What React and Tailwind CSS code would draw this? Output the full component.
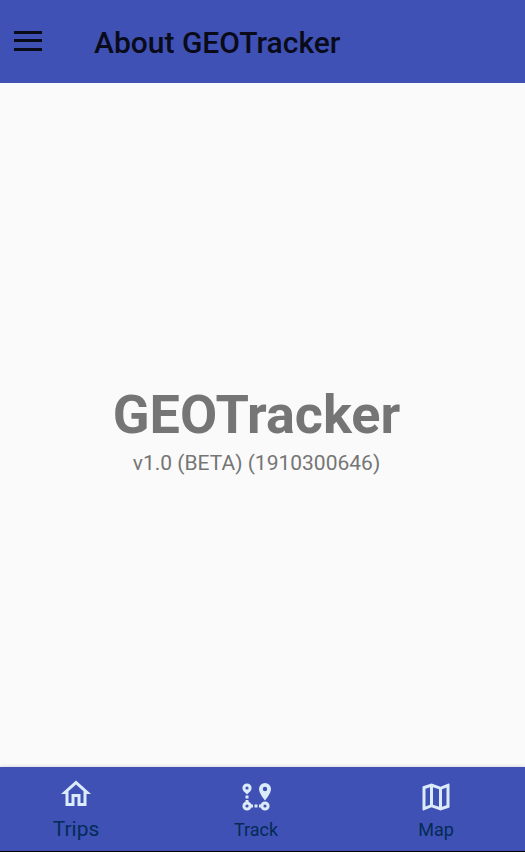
function HomeIcon() {
  return (
    <svg viewBox="0 0 24 24" className="size-9" fill="currentColor" aria-hidden="true">
      <path d="m12 5.69 5 4.5V18h-2v-6H9v6H7v-7.81l5-4.5M12 3 2 12h3v8h6v-6h2v6h6v-8h3L12 3z" />
    </svg>
  );
}

function TrackIcon() {
  return (
    <svg viewBox="0 0 36 36" className="size-9" fill="none" stroke="currentColor" aria-hidden="true">
      <g strokeWidth="3">
        <circle cx="9" cy="9" r="3.1" />
        <circle cx="9" cy="27" r="3.1" />
        <circle cx="27" cy="27" r="3.1" />
      </g>
      <g fill="currentColor" stroke="none">
        <path d="M5.6 12h6.8L9 15.4z" />
        <rect x="7.5" y="16.5" width="3" height="3" />
        <rect x="7.5" y="21" width="3" height="2" />
        <rect x="13" y="25.5" width="2" height="3" />
        <rect x="16.5" y="25.5" width="3" height="3" />
        <rect x="21" y="25.5" width="2" height="3" />
        <path
          fillRule="evenodd"
          d="M27 4a6 6 0 0 0-6 6c0 4.400 6 11.500 6 11.500s6-7.100 6-11.500a6 6 0 0 0-6-6zm0 3.800a2.200 2.200 0 1 1 0 4.400 2.200 2.200 0 0 1 0-4.400z"
        />
      </g>
    </svg>
  );
}

function MapIcon() {
  return (
    <svg viewBox="0 0 24 24" className="size-9" fill="currentColor" aria-hidden="true">
      <path d="m20.500 3-.16.03L15 5.100 9 3 3.360 4.900c-.21.07-.36.25-.36.48V20.500c0 .28.22.5.5.5l.16-.03L9 18.900l6 2.100 5.640-1.900c.21-.07.36-.25.36-.48V3.500c0-.28-.22-.5-.5-.5zM10 5.470l4 1.400v11.660l-4-1.400V5.470zm-5 .99 3-1.010v11.700l-3 1.160V6.460zm14 11.080-3 1.010V6.860l3-1.160v11.840z" />
    </svg>
  );
}

const tabs = [
  { label: "Trips", Icon: HomeIcon, active: true },
  { label: "Track", Icon: TrackIcon },
  { label: "Map", Icon: MapIcon },
];

export default function App() {
  return (
    <div className="flex min-h-screen flex-col overflow-x-hidden bg-[#fafafa] font-[Roboto,sans-serif]">
      <header className="flex h-[83px] items-center gap-[52px] bg-[#3f51b5] px-3.5 pb-0.5 text-[#090b19]">
        <button type="button" aria-label="Open navigation menu" className="flex h-5 w-7 flex-col justify-between">
          <span className="h-[3px] w-full bg-current" />
          <span className="h-[3px] w-full bg-current" />
          <span className="h-[3px] w-full bg-current" />
        </button>
        <h1 className="pt-1 text-[30px] leading-9 font-medium">About GEOTracker</h1>
      </header>

      <main className="flex flex-1 flex-col items-center justify-center pr-3 pt-3 text-[#757575]">
        <h2 className="text-[54px] leading-[64px] font-bold">GEOTracker</h2>
        <p className="text-[21px] leading-8">v1.0 (BETA) (1910300646)</p>
      </main>

      <nav className="flex h-[85px] justify-center border-b border-black bg-[#3f51b5] pr-[13px] shadow-[0_0_4px_rgba(0,0,0,0.2)]">
        {tabs.map(({ label, Icon, active }) => (
          <button
            key={label}
            type="button"
            aria-current={active ? "page" : undefined}
            className={`flex w-[180px] shrink-0 flex-col items-center text-[#dcebfa] ${active ? "pt-[9px]" : "pt-3"}`}
          >
            <Icon />
            <span className={`text-[#032b55] ${active ? "text-[21px] leading-[34px]" : "text-[18px] leading-[30px]"}`}>{label}</span>
          </button>
        ))}
      </nav>
    </div>
  );
}
